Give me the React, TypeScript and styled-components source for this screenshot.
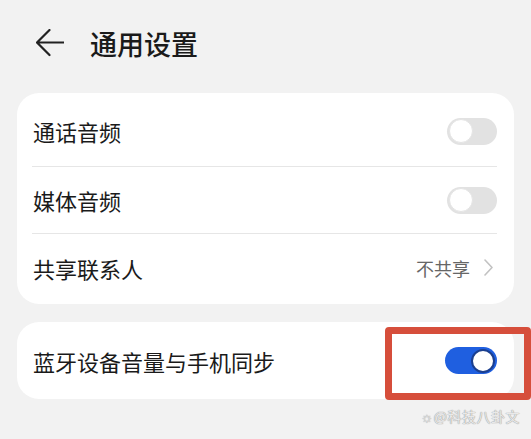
import React from "react";
import styled, { createGlobalStyle } from "styled-components";

const Global = createGlobalStyle`
  html, body { margin: 0; padding: 0; background: #f2f2f2; }
  body { font-family: "Noto Sans CJK SC", "Noto Sans", sans-serif; color: #1a1a1a; }
  * { box-sizing: border-box; }
`;

const Page = styled.div`
  width: 531px;
  height: 439px;
  padding: 0 17px;
  background: #f2f2f2;
  display: flex;
  flex-direction: column;
  position: relative;
  overflow: hidden;
`;

const Header = styled.div`
  height: 86px;
  display: flex;
  align-items: center;
  padding-left: 19px;
  gap: 26px;
  margin-bottom: 7px;
`;

const Title = styled.div`
  font-size: 27px;
  font-weight: 500;
  color: #1a1a1a;
  line-height: 1;
`;

const Card = styled.div<{ $mt?: number }>`
  background: #fff;
  border-radius: 22px;
  padding: 3px 0;
  margin-top: ${(p) => p.$mt ?? 0}px;
  position: relative;
`;

const Row = styled.div<{ $h: number }>`
  height: ${(p) => p.$h}px;
  display: flex;
  align-items: center;
  justify-content: space-between;
  padding: 0 17px 0 16px;
`;

const Label = styled.div`
  font-size: 22px;
  color: #1a1a1a;
  line-height: 1;
`;

const Divider = styled.div`
  height: 1px;
  background: #e6e6e6;
  margin: 0 17px 0 15px;
`;

const Track = styled.div<{ $on?: boolean }>`
  width: ${(p) => (p.$on ? 52 : 50)}px;
  height: 27px;
  border-radius: 14px;
  background: ${(p) => (p.$on ? "#1f5fe0" : "#e2e2e2")};
  display: flex;
  align-items: center;
  justify-content: ${(p) => (p.$on ? "flex-end" : "flex-start")};
  padding: 0 2px;
`;

const Knob = styled.div<{ $on?: boolean }>`
  width: 24px;
  height: 24px;
  border-radius: 50%;
  background: #fff;
  border: ${(p) => (p.$on ? "2px solid #1b3f8f" : "1px solid #e4e4e4")};
`;

const Value = styled.div`
  display: flex;
  align-items: center;
  gap: 14px;
  font-size: 18px;
  color: #666;
  margin-right: 4px;
`;

const Highlight = styled.div`
  position: absolute;
  left: 368px;
  top: 5px;
  width: 146px;
  height: 73px;
  border: 7px solid #d64e3b;
  border-radius: 4px;
  pointer-events: none;
`;

const Watermark = styled.div`
  position: absolute;
  right: 11px;
  top: 406px;
  font-size: 14px;
  color: #e9e9e9;
  text-shadow: 0 0 1px #9a9a9a, 0 0 1px #9a9a9a;
  letter-spacing: 0.5px;
`;

const Toggle = ({ on }: { on?: boolean }) => (
  <Track $on={on}>
    <Knob $on={on} />
  </Track>
);

export default function App() {
  return (
    <>
      <Global />
      <Page>
        <Header>
          <svg width="28" height="28" viewBox="0 0 28 28" fill="none">
            <path
              d="M1 13.5 H27.5 M13.5 1 L1 13.5 L13.5 26"
              stroke="#222"
              strokeWidth="2.2"
              strokeLinecap="round"
              strokeLinejoin="round"
            />
          </svg>
          <Title>通用设置</Title>
        </Header>
        <Card>
          <Row $h={70}>
            <Label>通话音频</Label>
            <Toggle />
          </Row>
          <Divider />
          <Row $h={66}>
            <Label>媒体音频</Label>
            <Toggle />
          </Row>
          <Divider />
          <Row $h={67}>
            <Label>共享联系人</Label>
            <Value>
              不共享
              <svg width="9" height="17" viewBox="0 0 9 17" fill="none">
                <path d="M1 1 L8 8.5 L1 16" stroke="#c2c2c2" strokeWidth="1.6" strokeLinecap="round" strokeLinejoin="round" />
              </svg>
            </Value>
          </Row>
        </Card>
        <Card $mt={18}>
          <Row $h={71}>
            <Label>蓝牙设备音量与手机同步</Label>
            <Toggle on />
          </Row>
          <Highlight />
        </Card>
        <Watermark>☼@科技八卦文</Watermark>
      </Page>
    </>
  );
}
